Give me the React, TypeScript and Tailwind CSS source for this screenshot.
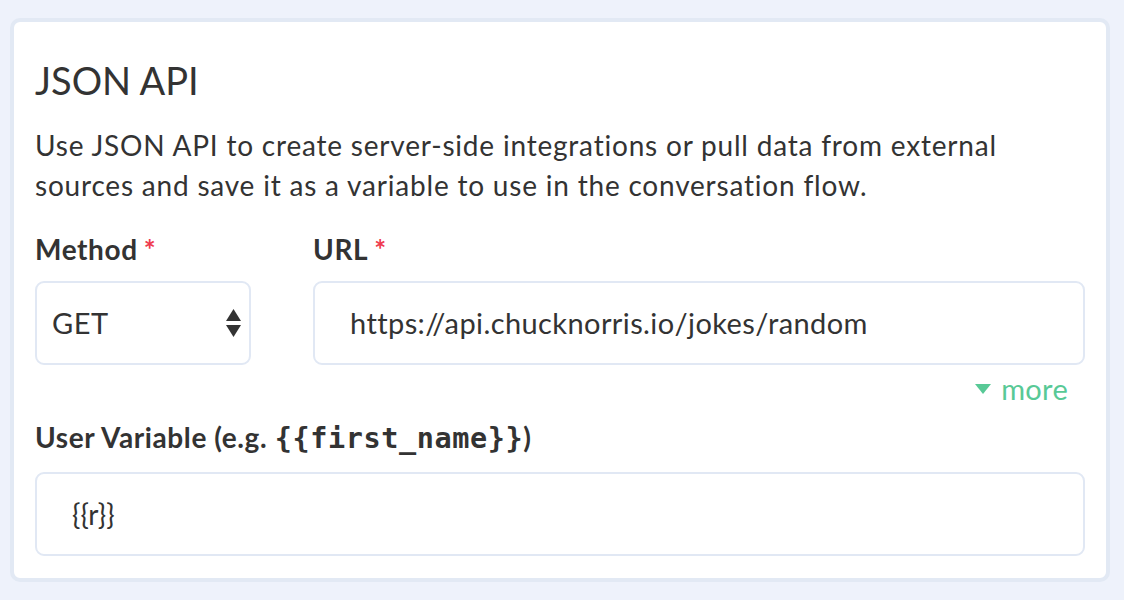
import React from 'react';

const lato = { fontFamily: "Lato, 'Open Sans', sans-serif" };

const Label: React.FC<{ children: React.ReactNode; required?: boolean }> = ({ children, required }) => (
  <label className="block text-[28px] font-bold text-[#333] leading-[34px] tracking-[0.6px]">
    {children}
    {required && <span className="ml-1.5 text-[#ef3b4f]">*</span>}
  </label>
);

const App: React.FC = () => {
  return (
    <div className="min-h-[600px] bg-[#eef2fb] pt-[18px] px-[10px]" style={lato}>
      <div className="w-[1100px] h-[564px] rounded-[10px] border-4 border-[#e2e9f4] bg-white px-[21px] pt-[35px]">
        <h2 className="text-[38px] leading-[46px] text-[#333]">JSON API</h2>
        <p className="mt-[22px] text-[28px] leading-[40px] tracking-[0.8px] text-[#333] w-[1020px]">
          Use JSON API to create server-side integrations or pull data from external sources and save it as a
          variable to use in the conversation flow.
        </p>

        <div className="mt-[27px] flex gap-[62px]">
          <div className="w-[216px]">
            <Label required>Method</Label>
            <div className="mt-[15px] flex h-[84px] items-center justify-between rounded-[9px] border-2 border-[#e1e8f4] pl-[15px] pr-[8px]">
              <span className="text-[29px] tracking-[0.5px] text-[#333]">GET</span>
              <svg width="15" height="28" viewBox="0 0 15 28" className="text-[#333]">
                <path d="M7.5 0 L15 12 L0 12 Z" fill="currentColor" />
                <path d="M0 16 L15 16 L7.5 28 Z" fill="currentColor" />
              </svg>
            </div>
          </div>
          <div className="flex-1">
            <Label required>URL</Label>
            <div className="mt-[15px] flex h-[84px] items-center rounded-[9px] border-2 border-[#e1e8f4] pl-[35px]">
              <span className="text-[29px] tracking-[0.4px] text-[#333]">https://api.chucknorris.io/jokes/random</span>
            </div>
          </div>
        </div>

        <div className="mt-[6px] flex items-center justify-end gap-[10px] pr-[17px] text-[#58c996]">
          <svg width="16" height="10" viewBox="0 0 16 10">
            <path d="M0 0 L16 0 L8 10 Z" fill="currentColor" />
          </svg>
          <span className="text-[29px] leading-[36px] tracking-[0.3px]">more</span>
        </div>

        <div className="mt-[13px]">
          <Label>
            User Variable (e.g.{' '}
            <code
              className="font-bold leading-none"
              style={{ fontFamily: "'DejaVu Sans Mono', 'Liberation Mono', monospace", fontSize: '28.5px', letterSpacing: '0.6px' }}
            >
              {'{{first_name}}'}
            </code>
            )
          </Label>
          <div className="mt-[18px] flex h-[84px] items-center rounded-[9px] border-2 border-[#e1e8f4] pl-[35px]">
            <span className="text-[28px] text-[#333]">{'{{r}}'}</span>
          </div>
        </div>
      </div>
    </div>
  );
};

export default App;
